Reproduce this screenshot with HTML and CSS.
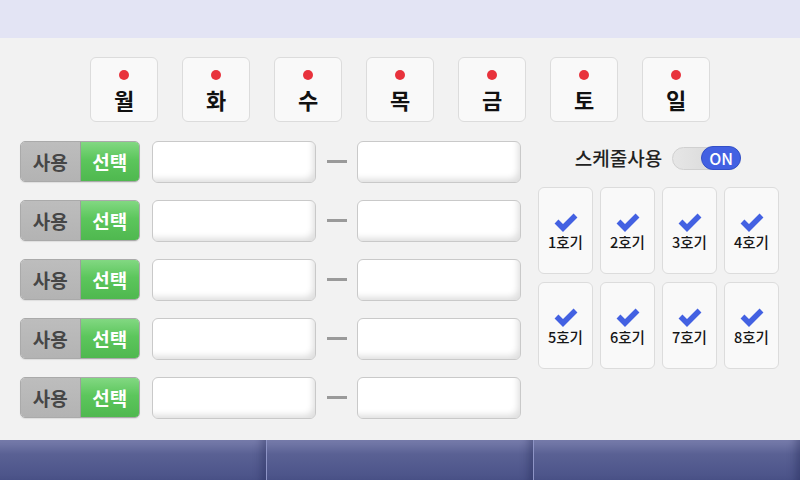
FILE: index.html
```html
<!DOCTYPE html>
<html lang="ko">
<head>
<meta charset="utf-8">
<link rel="stylesheet" href="styles.css">
</head>
<body>
<div class="screen">
  <div class="topbar"></div>
  <div class="main">
    <div class="days">
      <div class="day"><span class="dot"></span><span class="dname">월</span></div>
      <div class="day"><span class="dot"></span><span class="dname">화</span></div>
      <div class="day"><span class="dot"></span><span class="dname">수</span></div>
      <div class="day"><span class="dot"></span><span class="dname">목</span></div>
      <div class="day"><span class="dot"></span><span class="dname">금</span></div>
      <div class="day"><span class="dot"></span><span class="dname">토</span></div>
      <div class="day"><span class="dot"></span><span class="dname">일</span></div>
    </div>
    <div class="content">
      <div class="rows">
        <div class="row">
          <div class="seg"><span class="seg-off">사용</span><span class="seg-on">선택</span></div>
          <div class="field"></div><div class="dash"></div><div class="field"></div>
        </div>
        <div class="row">
          <div class="seg"><span class="seg-off">사용</span><span class="seg-on">선택</span></div>
          <div class="field"></div><div class="dash"></div><div class="field"></div>
        </div>
        <div class="row">
          <div class="seg"><span class="seg-off">사용</span><span class="seg-on">선택</span></div>
          <div class="field"></div><div class="dash"></div><div class="field"></div>
        </div>
        <div class="row">
          <div class="seg"><span class="seg-off">사용</span><span class="seg-on">선택</span></div>
          <div class="field"></div><div class="dash"></div><div class="field"></div>
        </div>
        <div class="row">
          <div class="seg"><span class="seg-off">사용</span><span class="seg-on">선택</span></div>
          <div class="field"></div><div class="dash"></div><div class="field"></div>
        </div>
      </div>
      <div class="panel">
        <div class="panel-head">
          <span class="panel-title">스케줄사용</span>
          <div class="switch"><span class="knob">ON</span></div>
        </div>
        <div class="units">
          <div class="unit"><svg class="check" viewBox="0 0 24 20"><path d="M2.5 9.5 L9 16 L21.5 3.5"/></svg><span class="uname">1호기</span></div>
          <div class="unit"><svg class="check" viewBox="0 0 24 20"><path d="M2.5 9.5 L9 16 L21.5 3.5"/></svg><span class="uname">2호기</span></div>
          <div class="unit"><svg class="check" viewBox="0 0 24 20"><path d="M2.5 9.5 L9 16 L21.5 3.5"/></svg><span class="uname">3호기</span></div>
          <div class="unit"><svg class="check" viewBox="0 0 24 20"><path d="M2.5 9.5 L9 16 L21.5 3.5"/></svg><span class="uname">4호기</span></div>
          <div class="unit"><svg class="check" viewBox="0 0 24 20"><path d="M2.5 9.5 L9 16 L21.5 3.5"/></svg><span class="uname">5호기</span></div>
          <div class="unit"><svg class="check" viewBox="0 0 24 20"><path d="M2.5 9.5 L9 16 L21.5 3.5"/></svg><span class="uname">6호기</span></div>
          <div class="unit"><svg class="check" viewBox="0 0 24 20"><path d="M2.5 9.5 L9 16 L21.5 3.5"/></svg><span class="uname">7호기</span></div>
          <div class="unit"><svg class="check" viewBox="0 0 24 20"><path d="M2.5 9.5 L9 16 L21.5 3.5"/></svg><span class="uname">8호기</span></div>
        </div>
      </div>
    </div>
  </div>
  <div class="bottombar">
    <div class="tab"></div>
    <div class="tab"></div>
    <div class="tab"></div>
  </div>
</div>
</body>
</html>
```

FILE: styles.css
```css
* { box-sizing: border-box; }
html, body { margin: 0; padding: 0; }
body {
  width: 800px;
  height: 480px;
  overflow: hidden;
  font-family: "Noto Sans CJK KR", "Noto Sans", sans-serif;
  background: #f2f2f2;
}
.screen {
  width: 800px;
  height: 480px;
  display: flex;
  flex-direction: column;
}
.topbar {
  height: 38px;
  background: #e3e4f4;
  flex: none;
}
.main {
  height: 402px;
  flex: none;
  background: #f2f2f2;
  padding-top: 19px;
}
.days {
  display: flex;
  gap: 24px;
  padding-left: 90px;
}
.day {
  width: 68px;
  height: 65px;
  background: #f9f9f9;
  border: 1px solid #dcdcdc;
  border-radius: 6px;
  display: flex;
  flex-direction: column;
  align-items: center;
  padding-top: 12px;
}
.dot {
  width: 10px;
  height: 10px;
  border-radius: 50%;
  background: #e8323c;
}
.dname {
  margin-top: 6px;
  font-size: 22px;
  line-height: 26px;
  font-weight: 700;
  color: #111;
}
.content {
  display: flex;
  margin-top: 19px;
}
.rows {
  display: flex;
  flex-direction: column;
  gap: 18px;
  padding-left: 20px;
}
.row {
  display: flex;
  align-items: center;
  height: 41px;
}
.seg {
  width: 120px;
  height: 41px;
  display: flex;
  border-radius: 5px;
  overflow: hidden;
  border: 1px solid #aaa;
  box-shadow: 0 1px 1px rgba(0,0,0,0.08);
}
.seg-off, .seg-on {
  flex: 1;
  display: flex;
  align-items: center;
  justify-content: center;
  font-size: 19px;
  font-weight: 700;
}
.seg-off {
  background: linear-gradient(#bdbdbd, #b3b3b3);
  color: #464646;
  border-right: 1px solid #9d9d9d;
}
.seg-on {
  background: linear-gradient(#82d882, #5cc65c 45%, #4fb84f);
  color: #fff;
}
.field {
  width: 164px;
  height: 42px;
  margin-left: 12px;
  background: #fff;
  border: 1px solid #c9c9c9;
  border-radius: 6px;
  box-shadow: inset -5px -6px 6px -3px rgba(0,0,0,0.13);
}
.dash {
  width: 20px;
  height: 3px;
  background: #9a9a9a;
  margin-left: 11px;
  margin-right: -2px;
}
.panel {
  margin-left: 17px;
  width: 240px;
}
.panel-head {
  display: flex;
  align-items: center;
  justify-content: center;
  gap: 10px;
  margin-top: 5px;
  height: 24px;
  margin-bottom: 17px;
}
.panel-title {
  font-size: 19px;
  font-weight: 500;
  color: #222;
  line-height: 24px;
}
.switch {
  width: 69px;
  height: 23px;
  border-radius: 12px;
  background: linear-gradient(90deg, #e6e6e6, #d3d3d3);
  border: 1px solid #d0d0d0;
  display: flex;
  justify-content: flex-end;
  align-items: center;
}
.knob {
  width: 40px;
  height: 24px;
  margin-right: -1px;
  border-radius: 12px;
  background: #4361e2;
  border: 1px solid #3350c8;
  color: #fff;
  font-size: 16px;
  font-weight: 500;
  display: flex;
  align-items: center;
  justify-content: center;
  line-height: 1;
}
.units {
  display: grid;
  grid-template-columns: repeat(4, 55px);
  grid-auto-rows: 87px;
  column-gap: 7px;
  row-gap: 8px;
}
.unit {
  background: #f9f9f9;
  border: 1px solid #dcdcdc;
  border-radius: 6px;
  display: flex;
  flex-direction: column;
  align-items: center;
  padding-top: 24px;
}
.check {
  width: 24px;
  height: 20px;
  display: block;
}
.check path {
  fill: none;
  stroke: #4361e2;
  stroke-width: 5.5;
  stroke-linecap: butt;
  stroke-linejoin: miter;
}
.uname {
  margin-top: 0;
  font-size: 14.5px;
  line-height: 20px;
  font-weight: 500;
  color: #161616;
}
.bottombar {
  height: 40px;
  flex: none;
  display: flex;
}
.tab {
  flex: 1;
  background: linear-gradient(#787dac, #5a6194 35%, #4a5288);
  box-shadow: inset -10px 0 8px -6px rgba(20,25,70,0.35);
}
.tab + .tab {
  border-left: 1px solid #8e94c6;
}
```
